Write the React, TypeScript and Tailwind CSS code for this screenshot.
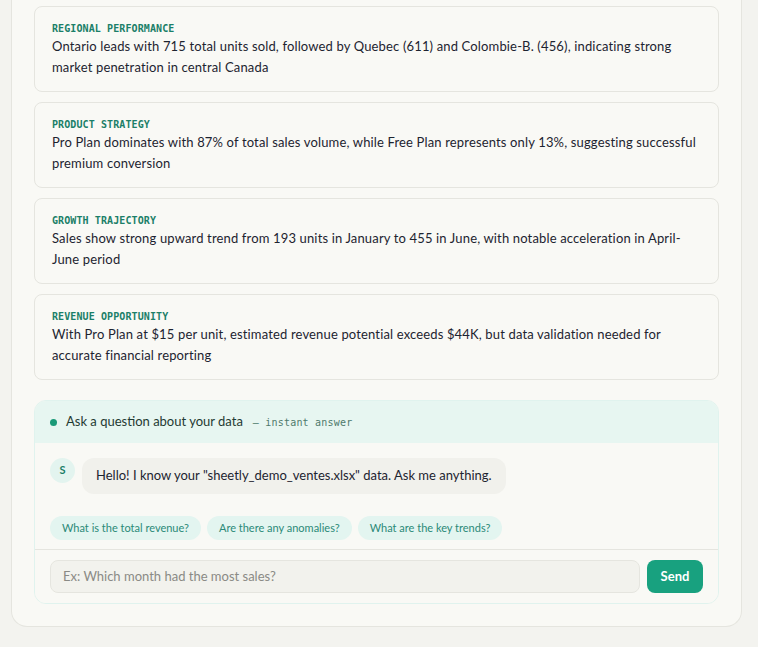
import React from "react";

const insights = [
  {
    label: "REGIONAL PERFORMANCE",
    text: "Ontario leads with 715 total units sold, followed by Quebec (611) and Colombie-B. (456), indicating strong market penetration in central Canada",
  },
  {
    label: "PRODUCT STRATEGY",
    text: "Pro Plan dominates with 87% of total sales volume, while Free Plan represents only 13%, suggesting successful premium conversion",
  },
  {
    label: "GROWTH TRAJECTORY",
    text: "Sales show strong upward trend from 193 units in January to 455 in June, with notable acceleration in April-June period",
  },
  {
    label: "REVENUE OPPORTUNITY",
    text: "With Pro Plan at $15 per unit, estimated revenue potential exceeds $44K, but data validation needed for accurate financial reporting",
  },
];

const suggestions = ["What is the total revenue?", "Are there any anomalies?", "What are the key trends?"];

const sans = "font-['Lato','Liberation_Sans',sans-serif]";
const mono = "font-['DejaVu_Sans_Mono','Liberation_Mono',monospace]";

export default function App() {
  return (
    <div className={`min-h-[647px] bg-[#f3f3ef] pb-[20px] ${sans}`}>
      <div className="ml-[11px] w-[731px] rounded-b-2xl border-x border-b border-[#e5e5df] bg-[#f9f9f5] px-[22px] pb-[22px] pt-[6px]">
        <div className="flex flex-col gap-[10px]">
          {insights.map((c) => (
            <div key={c.label} className="rounded-lg border border-[#e5e5df] bg-[#f9f9f5] px-[17px] pb-[13px] pt-[15px]">
              <div className={`${mono} text-[10px] font-bold leading-[13px] tracking-[0.1px] text-[#1b7f68]`}>{c.label}</div>
              <p className="mt-[1px] text-[13px] leading-[21px] tracking-[0.15px] text-[#1d2430]">{c.text}</p>
            </div>
          ))}
        </div>

        <div className="mt-[20px] overflow-hidden rounded-xl border border-[#e0f3ee]">
          <div className="flex h-[42px] items-center bg-[#e7f6f1] px-[15px]">
            <span className="h-[7px] w-[7px] rounded-full bg-[#1a9a78]" />
            <span className="ml-[9px] text-[13px] text-[#1f3a33]">Ask a question about your data</span>
            <span className={`${mono} ml-[10px] text-[10px] tracking-[0.2px] text-[#4e7a6c]`}>— instant answer</span>
          </div>
          <div className="bg-[#f9f9f5] px-[15px] pt-[15px]">
            <div className="flex items-start gap-[7px]">
              <div className="flex h-[25px] w-[25px] items-center justify-center rounded-full bg-[#e3f4ef] text-[11px] font-bold text-[#1b7f68]">
                S
              </div>
              <div className="flex h-[36px] items-center rounded-xl bg-[#f1f1ec] px-[14px] text-[13px] text-[#1d2430]">
                Hello! I know your "sheetly_demo_ventes.xlsx" data. Ask me anything.
              </div>
            </div>
            <div className="mt-[22px] flex gap-[6px] pb-[9px]">
              {suggestions.map((s) => (
                <span key={s} className="flex h-[24px] items-center rounded-full bg-[#e3f5f0] px-[12px] text-[11px] text-[#2b8a78]">
                  {s}
                </span>
              ))}
            </div>
          </div>
          <div className="flex gap-[7px] border-t border-[#e5e5df] bg-[#f9f9f5] px-[15px] py-[10px]">
            <div className="flex h-[33px] flex-1 items-center rounded-lg border border-[#e5e5df] bg-[#f2f2ed] px-[12px] text-[13px] text-[#8a8a85]">
              Ex: Which month had the most sales?
            </div>
            <button className="h-[33px] w-[56px] rounded-lg bg-[#18a17f] text-[13px] font-bold text-white">Send</button>
          </div>
        </div>
      </div>
    </div>
  );
}
